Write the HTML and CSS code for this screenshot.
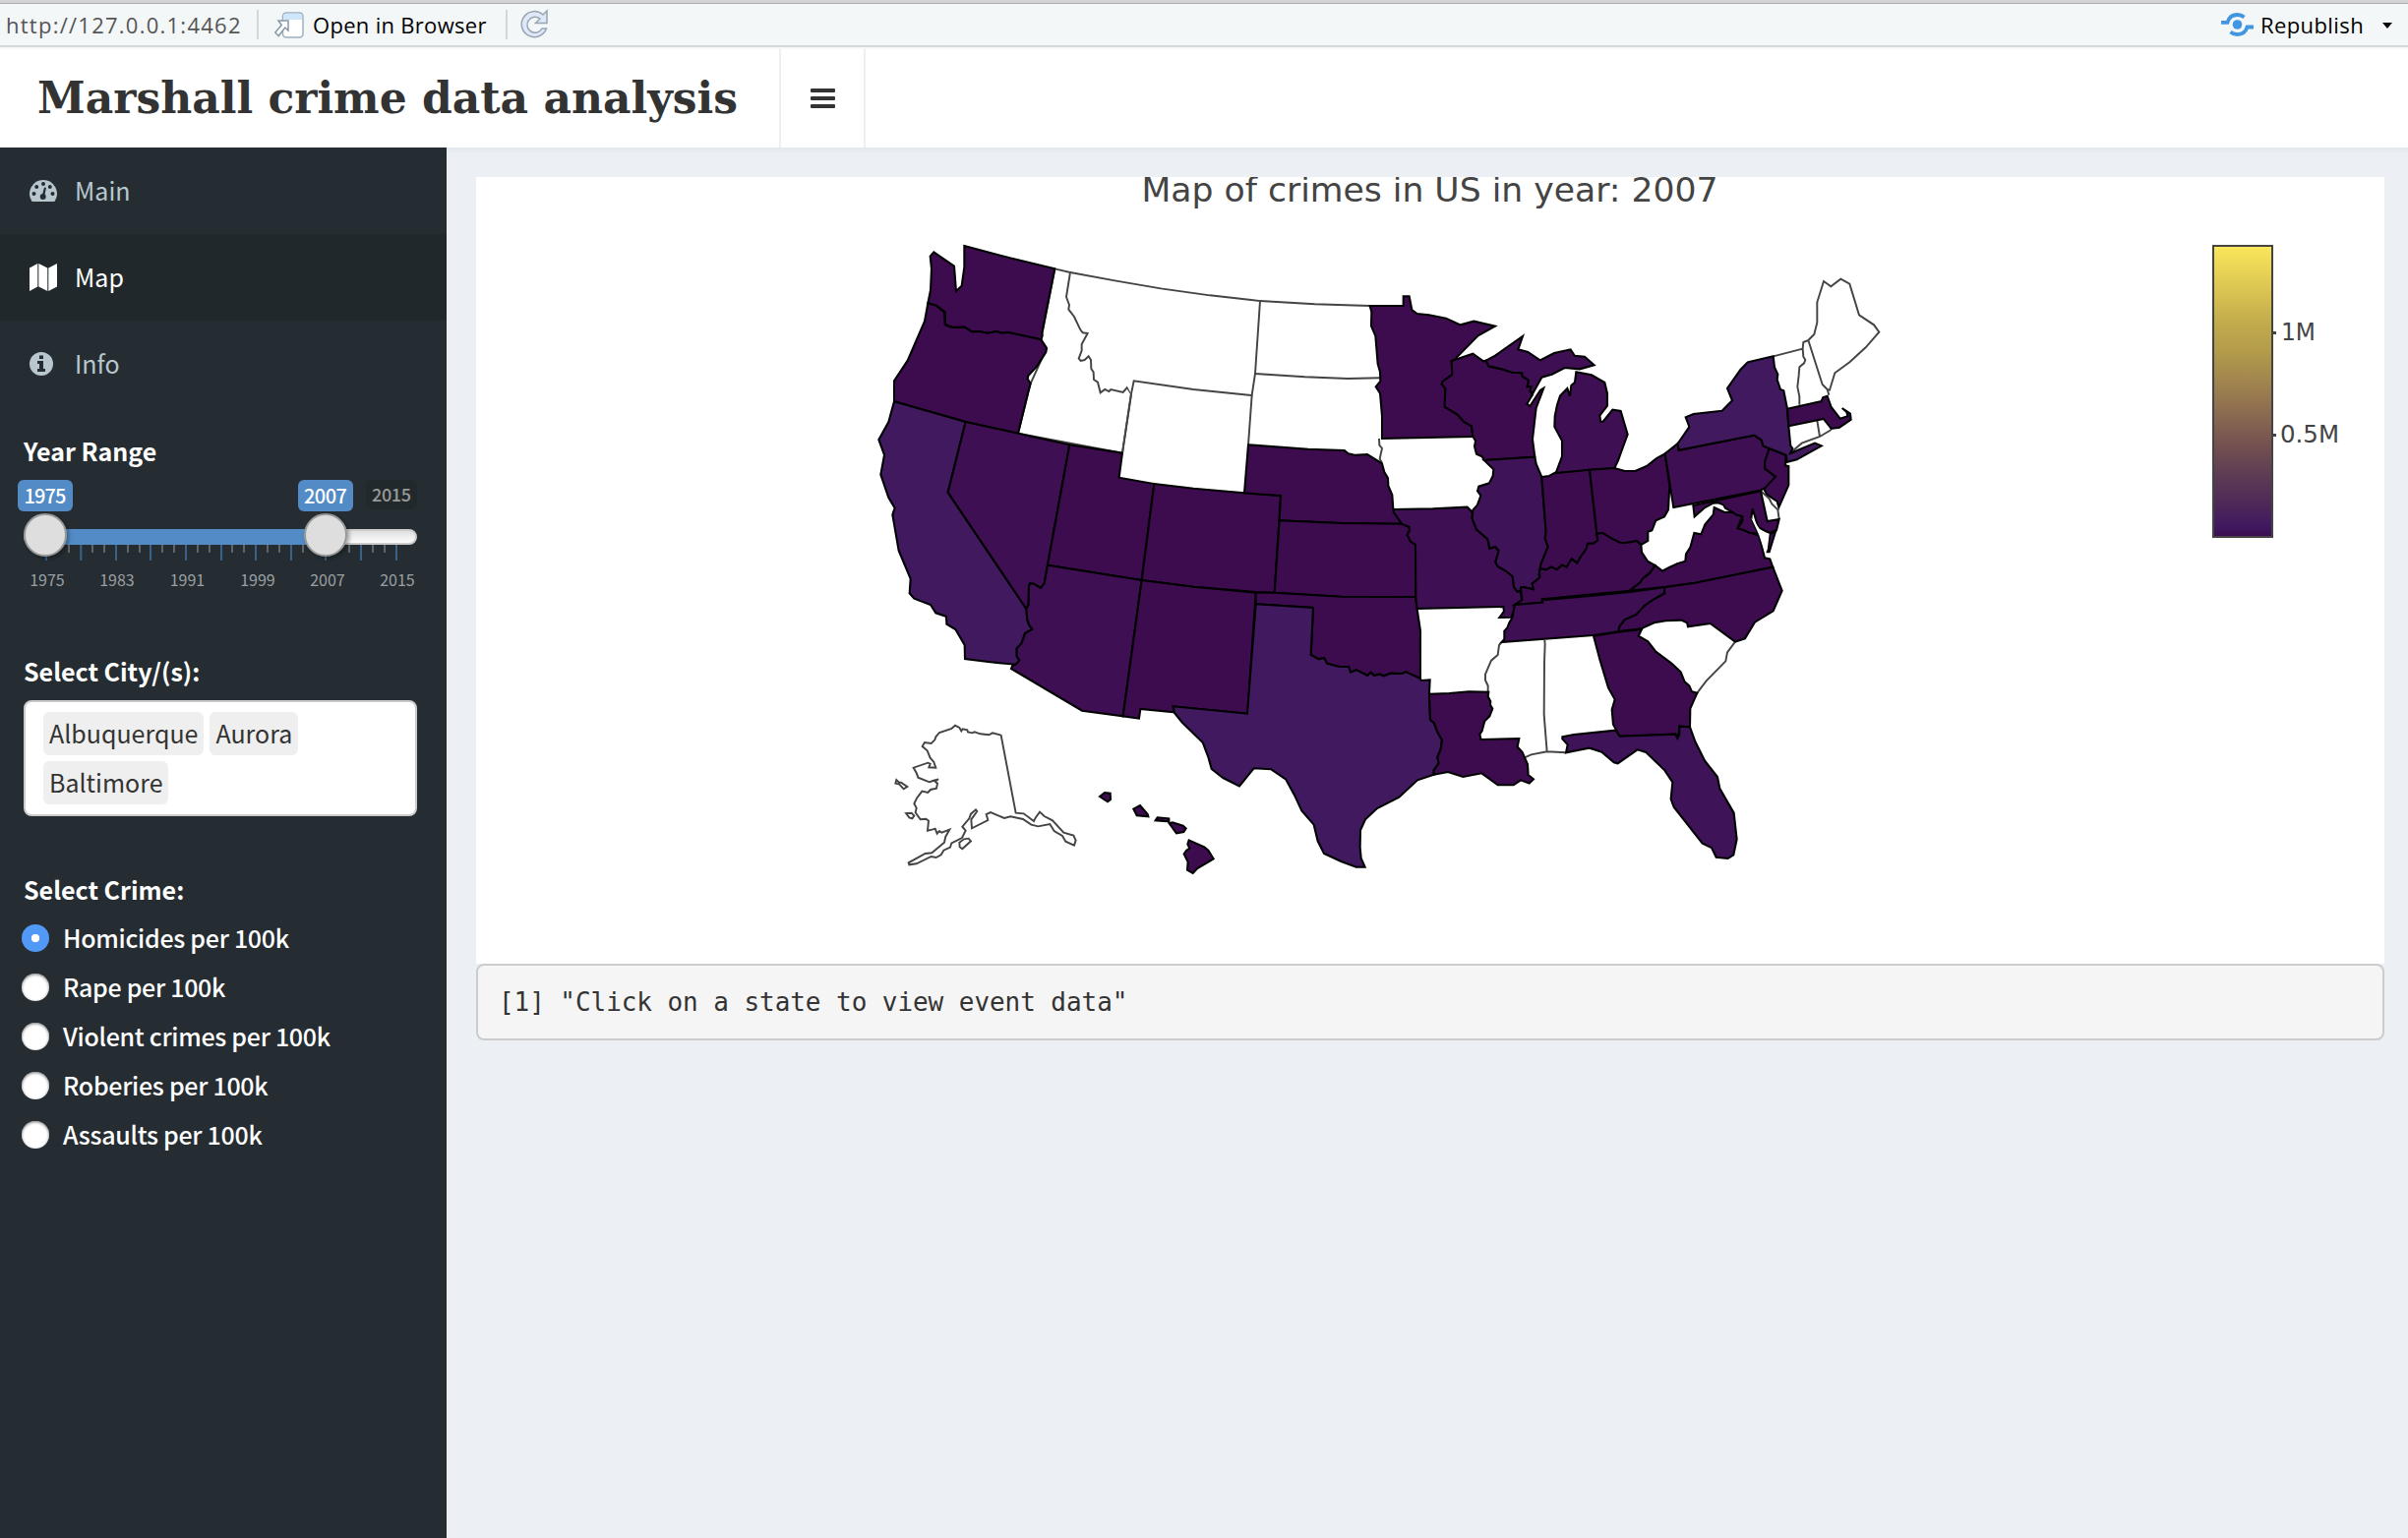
FILE: index.html
```html
<!DOCTYPE html>
<html lang="en">
<head>
<meta charset="utf-8">
<title>Marshall crime data analysis</title>
<link rel="stylesheet" href="styles.css">
</head>
<body>
<div class="viewer">
  <span class="url">http://127.0.0.1:4462</span>
  <i class="sep sep-a"></i>
  <svg class="ico-open" width="32" height="30" viewBox="0 0 32 30"><rect x="9.500" y="2" width="20.500" height="25" rx="3.500" fill="#fff" stroke="#9db0c2" stroke-width="1.500"/><path d="M10.300 9V6q0-3.200 3.200-3.200h12.500q3.200 0 3.200 3.200v3z" fill="#cfe6fa"/><path d="M5 10h10v10l-3.200-3-6.500 8.500-3.500-3.500 6.500-7.500z" fill="#fff" stroke="#8798a8" stroke-width="1.500"/></svg>
  <span class="open">Open in Browser</span>
  <i class="sep sep-b"></i>
  <svg class="ico-reload" width="30" height="32" viewBox="0 0 30 32"><path d="M28 2v12.500H16.500l4.500-4.500a8 8 0 1 0 2 10h4.500A13 13 0 1 1 24 6z" fill="#dfe7f8" stroke="#98a5b3" stroke-width="1.500"/></svg>
  <svg class="ico-pub" width="33" height="24" viewBox="0 0 33 24" fill="none" stroke="#4096e0" stroke-width="3.800"><circle cx="16.500" cy="12" r="4.800" fill="#4096e0" stroke="none"/><path d="M0 9.800h6.500C8 4.500 12 2 16.500 2q4 0 7 2.500M33 14.500h-6.500C25 19.500 21 22 16.500 22q-4 0-7-2.500"/></svg>
  <span class="pub">Republish</span>
  <i class="caret"></i>
</div>
<header class="header">
  <div class="logo"><span>Marshall crime data analysis</span></div>
  <div class="toggle"><i></i><i></i><i></i></div>
</header>
<div class="page">
  <aside class="sidebar">
    <nav>
      <a class="item"><svg width="28" height="24" viewBox="0 0 28 24"><path d="M14 1A14 14 0 0 0 2.300 22.500q.4.500 1 .5h21.400q.6 0 1-.5A14 14 0 0 0 14 1z" fill="#b8c7ce"/><g fill="#252d32"><circle cx="4.500" cy="15" r="2"/><circle cx="7.200" cy="8" r="2"/><circle cx="14" cy="5" r="2"/><circle cx="20.800" cy="8" r="2"/><circle cx="23.500" cy="15" r="2"/><circle cx="13.700" cy="18" r="3"/><path d="M15 8.500l2 .5-2 9h-2.500z"/></g></svg><span>Main</span></a>
      <a class="item on"><svg width="28" height="28" viewBox="0 0 28 28" fill="#fff"><path d="M0 4.500L8.300 0v23.500L0 28zM9.300 0l9 4.500V28l-9-4.500zM19.300 4.500L28 0v23.500L19.300 28z"/></svg><span>Map</span></a>
      <a class="item"><svg width="28" height="24" viewBox="0 0 28 24"><circle cx="12" cy="12" r="12" fill="#b8c7ce"/><path d="M10 3.500h4V7h-4zM8 9h6v8h2v3H8v-3h2v-5H8z" fill="#252d32"/></svg><span>Info</span></a>
    </nav>
    <section class="years">
      <h4>Year Range</h4>
      <svg class="slider" width="454" height="124" viewBox="0 480 454 124">
        <defs><linearGradient id="trk" x2="0" y2="1"><stop stop-color="#ddd"/><stop offset="1" stop-color="#fff"/></linearGradient>
        <filter id="sh" x="-30%" y="-30%" width="170%" height="170%"><feDropShadow dx="2" dy="2" stdDeviation="2" flood-opacity=".35"/></filter></defs>
        <path d="M47 554v16M82.300 554v16M118 554v16M153 554v16M189 554v16M225 554v16M260 554v16M296 554v16M331 554v16M367 554v16M403 554v16" stroke="#3b6187" stroke-width="2"/>
        <path d="M58 554v8M70 554v8M94 554v8M106 554v8M130 554v8M142 554v8M165 554v8M177 554v8M201 554v8M213 554v8M236 554v8M248 554v8M272 554v8M284 554v8M308 554v8M320 554v8M343 554v8M355 554v8M379 554v8M391 554v8" stroke="#5e6468" stroke-width="2"/>
        <rect x="25" y="539" width="398" height="14" rx="7" fill="url(#trk)" stroke="#ccc" stroke-width="2"/>
        <rect x="46" y="538" width="285" height="16" fill="#528bc5"/>
        <g fill="#dedede" stroke="#999" stroke-width="2" filter="url(#sh)"><circle cx="46" cy="544" r="21"/><circle cx="331" cy="544" r="21"/></g>
        <rect x="18" y="488" width="56" height="32" rx="6" fill="#528bc5"/><rect x="303" y="488" width="56" height="32" rx="6" fill="#528bc5"/><rect x="372" y="488" width="52" height="30" rx="6" fill="#21292c"/>
        <g class="bub"><text x="46" y="512" textLength="43">1975</text><text x="331" y="512" textLength="44">2007</text></g>
        <text class="max" x="398" y="510" textLength="40">2015</text>
        <g class="grid"><text x="48" y="596">1975</text><text x="119" y="596">1983</text><text x="190.500" y="596">1991</text><text x="262" y="596">1999</text><text x="333" y="596">2007</text><text x="404" y="596">2015</text></g>
      </svg>
    </section>
    <section class="cities">
      <h4>Select City/(s):</h4>
      <div class="select"><span>Albuquerque</span><span>Aurora</span><span>Baltimore</span></div>
    </section>
    <section class="crimes">
      <h4>Select Crime:</h4>
      <label class="radio on"><i></i><span>Homicides per 100k</span></label>
      <label class="radio"><i></i><span>Rape per 100k</span></label>
      <label class="radio"><i></i><span>Violent crimes per 100k</span></label>
      <label class="radio"><i></i><span>Roberies per 100k</span></label>
      <label class="radio"><i></i><span>Assaults per 100k</span></label>
    </section>
  </aside>
  <main class="content">
    <svg class="plot" width="1940" height="800" viewBox="484 180 1940 800">
      <defs><linearGradient id="bar" x2="0" y2="1"><stop stop-color="#fbe75a"/><stop offset=".26" stop-color="#c3ac4c"/><stop offset=".37" stop-color="#b29a4b"/><stop offset=".53" stop-color="#957650"/><stop offset=".65" stop-color="#7c5950"/><stop offset=".76" stop-color="#634152"/><stop offset=".89" stop-color="#4d2859"/><stop offset=".96" stop-color="#401a60"/><stop offset="1" stop-color="#3d0c50"/></linearGradient></defs>
      <text class="title" x="1453.500" y="205" textLength="586" lengthAdjust="spacingAndGlyphs">Map of crimes in US in year: 2007</text>
      <g class="none" transform="translate(880 230) scale(.33333)">
        <path d="M577 130L624 141 612 216 621 240 619 254 636 276 655 316 662 325 677 327 659 360 659 380 650 404 656 411 668 408 680 397 687 408 688 435 695 445 696 468 708 476 716 508 730 498 742 504 748 498 785 507 798 492 810 512 783 692 465 632 503 480 552 372 535 346Z"/>
        <path d="M624 141L760 166 900 190 1050 211 1203 228 1188 450 1178 516 1000 498 818 472 810 512"/>
        <path d="M810 512L783 692M1203 228L1370 238 1538 243M1188 450L1340 460 1470 465 1570 463M1178 516L1167 667"/>
        <path d="M1566 648L1567 668 1575 678 1568 710 1575 722"/>
      </g>
      <g class="none" transform="translate(1560 260) scale(.33333)">
        <path d="M728 307L818 284 820 308 826 318 822 328 808 340 806 365 802 400 808 430 808 455M818 284L820 264 835 258 878 393 893 408 898 425M835 258L853 240 862 204 862 142 882 78 904 94 934 71 961 86 990 181 1035 211 1051 233 1010 280 962 324 916 358 900 410 893 408"/>
        <path d="M905 531L870 552 815 572 785 598M862 503L870 552M690 718L715 740 724 757 742 775 746 804"/>
      </g>
      <g class="none" transform="translate(1500 540) scale(.33333)">
        <path d="M792 338L768 370 763 397 704 457 676 494M211 333L212 345 210 400 209 560 218 673M276 676L218 673 170 682 148 692M80 339L72 348 68 378 48 395 30 437 30 455 38 472 38 490"/>
      </g>
      <g class="none" transform="translate(880 700) scale(.33333)">
        <path d="M413 143L458 380 482 382 513 405 518 395 531 377 545 390 570 403 604 440 634 449 641 464 636 479 610 467 600 450 575 435 562 414 526 421 505 416 480 399 442 391 423 396 381 378 368 384 373 402 324 427 322 400 340 375 336 370 321 383 316 397 295 422 305 434 294 456 262 472 258 485 238 494 230 508 215 516 200 513 155 535 133 538 131 532 182 504 202 502 240 470 244 452 256 431 232 440 225 435 218 443 212 428 205 430 189 434 192 404 184 398 167 400 152 379 155 365 148 352 156 335 172 314 190 318 198 309 216 305 219 290 212 284 222 277 205 282 195 286 180 280 160 272 155 258 146 242 190 227 197 230 193 241 214 242 208 225 197 212 188 190 173 177 180 165 200 168 211 157 214 148 225 135 262 123 273 113 286 120 292 130 296 124 310 127 312 133 325 136 332 133 350 139 376 142 387 136Z"/>
        <path d="M94 279L91 290 103 293 116 307 127 300 108 287 102 287ZM123 381L133 394 142 397 148 389 140 380ZM286 470L300 460 314 458 321 466 295 490 287 484Z"/>
      </g>
      <g class="filled" transform="translate(880 230) scale(.33333)">
        <path d="M301 60L440 97 577 130 538 325 539 335 535 346 435 324 415 326 400 321 371 326 346 321 324 322 302 308 268 309 243 301 242 262 215 242 190 235 198 195 201 130 197 92 208 79 270 122 276 198 293 182 301 125Z"/>
        <path d="M190 235L215 242 240 262 242 300 256 307 268 309 302 308 324 322 346 321 371 326 400 321 415 326 435 324 535 346 552 372 550 384 522 428 496 456 494 466 503 480 496 505 465 632 305 597 87 535 87 472 128 410 180 290Z"/>
        <path class="b" d="M87 535L305 597 251 812 490 1167 493 1200 498 1215 508 1230 486 1242 476 1272 461 1288 461 1312 469 1325 458 1337 380 1330 303 1320 302 1278 274 1230 247 1214 246 1191 214 1180 198 1155 148 1136 134 1120 137 1076 101 990 82 880 89 860 70 828 46 758 57 698 40 651 70 597Z"/>
        <path class="c" d="M305 597L465 632 622 667 555 1034 545 1090 534 1104 513 1091 501 1090 498 1100 497 1155 490 1167 251 812Z"/>
        <path d="M622 667L783 692 773 767 880 786 842 1080 555 1034Z"/>
        <path class="c" d="M555 1034L842 1080 785 1495 660 1478 444 1350 448 1340 458 1337 469 1325 461 1312 461 1288 476 1272 486 1242 508 1230 498 1215 493 1200 490 1167 497 1155 498 1100 501 1090 513 1091 534 1104 545 1090Z"/>
        <path d="M880 786L1000 800 1155 814 1266 822 1247 1118 1190 1116 1000 1100 842 1080Z"/>
        <path d="M842 1080L1000 1100 1190 1118 1165 1487 938 1465 942 1483 838 1473 834 1502 785 1495Z"/>
        <path d="M1167 667L1350 680 1460 684 1472 694 1492 698 1530 696 1562 716 1575 724 1582 750 1593 768 1594 792 1606 820 1609 862 1635 908 1450 906 1262 898 1266 822 1155 814Z"/>
        <path d="M1262 898L1450 906 1637 908 1658 918 1659 928 1652 942 1662 962 1677 972 1678 1131 1450 1130 1247 1118Z"/>
        <path d="M1190 1118L1247 1118 1450 1130 1677 1131 1682 1168 1692 1235 1692 1380 1648 1360 1635 1365 1602 1364 1580 1372 1567 1367 1550 1371 1541 1361 1531 1371 1497 1354 1479 1361 1473 1344 1442 1343 1407 1334 1398 1317 1382 1321 1358 1308 1365 1164 1190 1153Z"/>
      </g>
      <g class="filled" transform="translate(1240 560) scale(.33333)">
        <path class="b" d="M110 163L285 174 278 318 302 331 318 327 327 344 362 353 393 354 399 371 417 364 451 381 461 371 470 381 487 377 500 382 522 374 555 375 568 370 612 390 614 396 641 394 639 437 642 515 654 526 664 553 678 578 674 605 664 630 668 648 653 670 653 683 603 700 547 752 480 786 444 820 429 853 428 905 431 938 443 965 416 965 370 948 318 924 299 886 287 836 250 793 228 746 202 698 157 667 104 664 60 718 10 693-25 666-35 630-52 585-115 524-138 495-142 475 84 497Z"/>
        <path d="M639 437L700 435 760 430 820 431 818 445 826 460 825 470 832 482 823 505 808 520 800 550 793 560 797 576 913 573 908 598 923 615 939 652 941 684 957 697 944 710 918 700 896 715 848 715 799 679 742 690 696 675 653 683 653 670 668 648 664 630 674 605 678 578 664 553 654 526 642 515Z"/>
      </g>
      <g class="filled" transform="translate(1280 230) scale(.33333)">
        <path d="M338 243L440 243 440 214 458 214 466 255 482 267 518 271 570 281 614 301 655 290 720 305 668 334 603 400 600 406 587 411 589 453 560 474 557 482 568 495 566 551 605 575 625 597 648 610 652 642 375 648 375 580 369 510 356 490 370 473 369 445 362 420 355 335 342 305 343 262Z"/>
        <path d="M587 411L652 389 684 412 692 410 700 427 740 436 772 446 802 448 803 458 822 470 818 490 829 490 827 503 834 514 817 542 826 549 858 500 868 494 845 555 834 650 841 704 686 714 680 703 663 695 657 672 660 655 652 642 648 610 625 597 605 575 566 551 568 495 557 482 560 474 589 453Z"/>
        <path class="c" d="M692 410L720 395 804 336 790 376 820 384 857 409 900 387 950 376 962 395 993 398 1022 424 978 436 932 432 893 452 862 461 834 512 827 503 829 490 818 490 822 470 803 458 802 448 772 446 740 436 700 427Z"/>
        <path class="c" d="M410 864L530 862 635 857 650 872 650 892 663 925 697 955 703 983 720 978 731 990 721 1025 728 1038 750 1050 773 1068 777 1100 787 1114 797 1113 802 1140 780 1155 776 1175 770 1193 733 1194 747 1175 745 1161 482 1167 478 1131 477 972 462 962 452 942 459 928 458 918 435 908 410 872Z"/>
        <path class="d" d="M686 714L841 704 845 725 862 765 875 935 872 952 881 978 860 1030 853 1063 858 1074 833 1090 837 1108 806 1101 798 1103 797 1113 787 1114 777 1100 773 1068 750 1050 728 1038 721 1025 731 990 720 978 703 983 697 955 663 925 650 892 652 866 666 850 676 822 666 808 670 794 702 784 713 762 715 742Z"/>
        <path d="M862 765L885 762 902 752 1008 742 1030 937 1033 958 1020 968 1002 968 998 985 983 1005 970 1028 953 1015 938 1040 924 1034 908 1048 892 1040 875 1048 860 1045 855 1052 860 1030 881 978 872 952 875 935Z"/>
      </g>
      <g class="filled" transform="translate(1560 260) scale(.33333)">
        <path class="c" d="M127 355L174 364 214 387 222 420 222 458 199 488 202 506 209 506 238 470 263 474 284 545 264 600 255 625 244 648 168 653 65 663 84 612 84 565 61 522 62 490 69 455 78 428 100 405 108 428 112 396 123 386Z"/>
        <path d="M168 653L244 648 273 656 307 657 342 642 372 618 398 604 412 700 408 775 396 796 370 808 358 838 346 842 346 870 325 882 312 870 280 876 262 876 235 863 208 846 190 848Z"/>
        <path d="M190 848L208 846 235 863 262 876 280 876 312 870 325 882 327 905 345 932 368 945 352 968 330 985 322 998 290 1022 180 1033 25 1048 22 1058-60 1065-38 1050-42 1013-34 1011-3 1018-7 1000 16 982 15 962 20 955 35 958 52 950 68 958 84 944 98 950 113 925 130 938 143 915 158 895 162 878 180 878 193 868Z"/>
        <path d="M290 1022L322 998 330 985 352 968 368 945 390 962 408 952 435 940 460 932 462 910 475 890 487 846 508 850 520 820 545 790 548 768 580 783 603 782 615 790 634 795 620 830 640 838 685 855 702 922 718 925 727 950 490 998 400 1010ZM718 848L735 842 716 904 710 904Z"/>
        <path d="M396 1012L490 998 727 950 755 1022 728 1084 672 1118 642 1168 612 1178 536 1122 468 1132 465 1120 448 1112 400 1114 365 1120 325 1138 256 1146 258 1132 275 1110 310 1095 335 1068 360 1050 397 1030Z"/>
        <path class="c" d="M398 604L437 573 440 593 670 548 692 562 697 580 716 588 702 630 703 650 735 674 710 705 688 716 424 768Z"/>
        <path d="M716 588L767 608 765 640 775 642 775 700 745 768 740 750 708 728 700 712 735 674 703 650 702 630Z"/>
        <path class="b" d="M437 573L472 522 461 493 485 483 572 473 603 442 588 405 628 348 650 325 728 307 732 340 742 362 740 378 750 408 760 412 771 467 775 520 781 580 787 588 780 603 855 572 875 580 800 622 770 630 767 608 716 588 697 580 692 562 670 548 440 593Z"/>
        <path d="M771 467L875 444 880 432 893 428 905 462 932 497 955 490 952 477 938 465 963 482 965 500 930 524 905 528 895 515 882 498 775 520Z"/>
        <path d="M484 762L690 718 710 810 746 804 738 838 716 846 682 828 665 772 661 800 682 848 655 845 640 838 620 832 634 810 634 795 615 790 603 782 582 770 576 760 560 754 545 755 520 768 488 796Z"/>
        <path class="bay" d="M661 800L668 805 690 840 716 848 710 898 703 905 684 850Z"/>
      </g>
      <g class="filled" transform="translate(1500 540) scale(.33333)">
        <path class="c" d="M120 225L205 218 203 208 215 210 350 198 470 186 577 172 575 190 540 210 515 228 490 255 455 270 438 292 436 307 360 318 80 339 88 330 88 305 97 295 103 280 112 265Z"/>
        <path d="M360 320L436 308 507 300 497 320 526 337 550 368 598 404 626 430 638 460 652 472 660 490 676 494 655 542 654 598 622 596 618 632 610 620 440 626 420 590 416 545 425 514 405 478 380 395Z"/>
        <path class="d" d="M265 628L300 621 427 608 440 626 610 620 616 632 622 620 622 596 654 598 670 642 700 702 738 750 745 785 788 860 797 940 787 988 770 999 734 995 720 966 692 953 605 842 596 818 601 766 577 730 520 675 494 667 434 709 422 706 385 674 347 662 276 676 281 652 265 634Z"/>
      </g>
      <g class="filled" transform="translate(880 700) scale(.33333)">
        <path d="M714 330L729 318 746 320 747 339 738 346ZM817 368L837 357 860 384 862 391 827 388ZM884 403L890 394 925 397 925 406ZM926 412L936 409 968 419 977 427 970 438 948 442ZM986 463L1033 484 1045 494 1061 520 1012 549 998 564 981 554 983 530 971 505 978 495 988 488 982 475Z"/>
      </g>
      <rect x="2250" y="250" width="60" height="296" fill="url(#bar)" stroke="#444" stroke-width="2"/>
      <path d="M2310 338.500h4M2310 442.500h4" stroke="#444" stroke-width="3"/>
      <text class="tick" x="2319" y="346" textLength="35" lengthAdjust="spacingAndGlyphs">1M</text>
      <text class="tick" x="2318" y="450" textLength="60" lengthAdjust="spacingAndGlyphs">0.5M</text>
    </svg>
    <pre>[1] "Click on a state to view event data"</pre>
  </main>
</div>
</body>
</html>
```
FILE: styles.css
```css
* { box-sizing: border-box; }
html, body { margin: 0; height: 100%; }
body {
  display: flex; flex-direction: column; height: 1564px; overflow: hidden;
  background: #ecf0f5; color: #333;
  font: 25px/36px "Noto Sans CJK SC", "Open Sans", sans-serif;
}
svg { display: block; flex: none; }

.viewer {
  display: flex; align-items: center; flex: none; height: 50px; padding: 0 16px 0 6px;
  background: #f3f7f8; border-top: 4px solid #b5b5b7; border-bottom: 4px solid #d5d9db;
  border-image: linear-gradient(#d4d2d4 0 3px, #adadad 3px 5px, #d5d9db 5px 48px, #f7f8f8 48px) 4;
  font: 22px/30px "Open Sans", sans-serif; color: #000;
}
.url { width: 255px; color: #555; letter-spacing: 1.25px; white-space: nowrap; }
.sep { width: 2px; height: 30px; background: #d3d7d9; }
.ico-open { margin: 2px 8px 0 15px; }
.open { width: 196px; white-space: nowrap; letter-spacing: .3px; }
.ico-reload { margin-left: 12px; }
.ico-pub { margin-left: auto; }
.pub { width: 124px; margin-left: 7px; white-space: nowrap; letter-spacing: .4px; }
.caret { border: 5px solid transparent; border-top: 6px solid #000; border-bottom: 0; margin-top: 2px; }

.header { display: flex; flex: none; height: 100px; background: #fff; }
.logo {
  width: 794px; padding-left: 38px; border-right: 2px solid #eee; white-space: nowrap;
  font: bold 44px/100px "DejaVu Serif", serif;
}
.toggle {
  display: flex; flex-direction: column; justify-content: center; align-items: center;
  gap: 4px; width: 86px; border-right: 2px solid #eee;
}
.toggle i { width: 25px; height: 4px; border-radius: 1px; background: #333; }

.page { display: flex; flex: 1; min-height: 0; }
.sidebar { width: 454px; background: #252d32; color: #fff; font-weight: 500; }
.item { display: flex; align-items: center; gap: 18px; height: 88px; padding-left: 30px; color: #b8c7ce; font-weight: 400; }
.item span, .radio span { padding-bottom: 2px; }
.item.on { background: #20282b; color: #fff; }
h4 { margin: 0 0 0 24px; font-size: 25px; line-height: 36px; font-weight: 700; }
.years { padding-top: 26px; }
.slider { margin-top: 4px; }
.slider text { text-anchor: middle; }
.bub { fill: #fff; font-size: 20px; }
.max { fill: #999; font-size: 18px; }
.grid { fill: #9a9fa3; font-size: 16px; font-weight: 400; }
.cities { padding-top: 60px; }
.select {
  display: flex; flex-wrap: wrap; align-content: flex-start; gap: 6px;
  width: 400px; height: 118px; margin: 12px 0 0 24px; padding: 10px 60px 10px 18px;
  border: 2px solid #ccc; border-radius: 8px; background: #fff; color: #333; font-weight: 400;
}
.select span { height: 44px; padding: 0 6px; line-height: 42px; border-radius: 6px; background: #efefef; }
.crimes { padding-top: 56px; }
.crimes h4 { margin-bottom: 7px; }
.radio { display: flex; align-items: center; gap: 14px; height: 50px; padding-left: 22px; letter-spacing: -.3px; }
.radio i {
  width: 28px; height: 28px; border-radius: 50%;
  background: #fff; box-shadow: inset 0 1px 3px #777;
}
.radio.on i { background: radial-gradient(circle, #fff 0 4px, #5198f7 4.5px); box-shadow: none; }

.content { flex: 1; padding: 30px 24px 0 30px; box-shadow: inset 0 5px 6px -4px #dce1e5; }
.plot { background: #fff; font-family: "DejaVu Sans", Verdana, sans-serif; fill: #444; }
.title { font-size: 33px; text-anchor: middle; }
.tick { font-size: 24px; }
.none path { fill: #fff; stroke: #444; stroke-width: 5.8; }
.filled path { fill: #3d0c4f; stroke: #000; stroke-width: 6.2; }
.filled .b { fill: #40195e; }
.filled .c { fill: #3e0f52; }
.filled .d { fill: #3f1357; }
.filled .bay { fill: #fff; stroke: none; }
pre {
  margin: 0; height: 78px; padding: 0 21px; border: 2px solid #ccc; border-radius: 8px;
  background: #f5f5f5; color: #333; font: 26px/74px "DejaVu Sans Mono", monospace; letter-spacing: -.06px;
}
```
